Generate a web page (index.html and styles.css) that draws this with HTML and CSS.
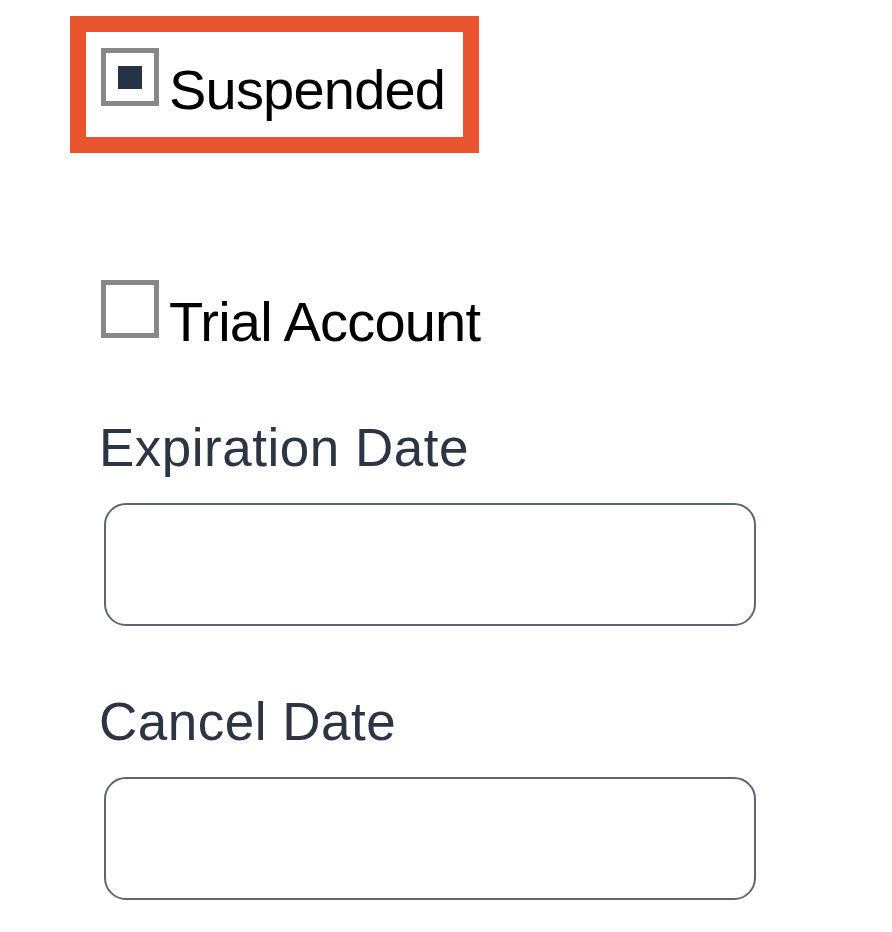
FILE: index.html
```html
<!DOCTYPE html>
<html lang="en">
<head>
<meta charset="utf-8">
<title>Account status</title>
<link rel="stylesheet" href="styles.css">
</head>
<body>
  <div class="highlight">
    <label class="check-row">
      <span class="box checked"><span class="mark"></span></span>
      <span class="check-text">Suspended</span>
    </label>
  </div>
  <div class="form">
    <label class="check-row trial">
      <span class="box"></span>
      <span class="check-text">Trial Account</span>
    </label>
    <div class="field first">
      <div class="field-label">Expiration Date</div>
      <div class="input"></div>
    </div>
    <div class="field">
      <div class="field-label">Cancel Date</div>
      <div class="input"></div>
    </div>
  </div>
</body>
</html>
```
FILE: styles.css
```css
html, body {
  margin: 0;
  padding: 0;
  background: #ffffff;
}

body {
  font-family: "Liberation Sans", Arial, sans-serif;
}

.highlight {
  width: 362px;
  margin: 16px 0 0 70px;
  border: 16px solid #e9552f;
  padding: 16px 0 19px 15px;
}

.check-row {
  display: flex;
  align-items: flex-start;
  gap: 10px;
}

.box {
  box-sizing: border-box;
  width: 58px;
  height: 58px;
  border: 5px solid #888888;
  background: #ffffff;
  display: flex;
  align-items: center;
  justify-content: center;
  flex: none;
}

.mark {
  width: 24px;
  height: 23px;
  background: #253346;
}

.check-text {
  margin-top: 14px;
  font-size: 56px;
  line-height: 56px;
  letter-spacing: -0.8px;
  color: #000000;
  white-space: nowrap;
}

.form {
  margin-left: 101px;
}

.trial {
  margin-top: 127px;
}

.field.first {
  margin-top: 68px;
}

.field {
  margin-top: 66px;
}

.field-label {
  margin-left: -2px;
  font-size: 53px;
  line-height: 60px;
  letter-spacing: 0.5px;
  color: #2d3444;
  margin-bottom: 25px;
}

.input {
  box-sizing: border-box;
  margin-left: 3px;
  width: 652px;
  height: 123px;
  border: 2px solid #5f6573;
  border-radius: 22px;
  background: #ffffff;
}
```
